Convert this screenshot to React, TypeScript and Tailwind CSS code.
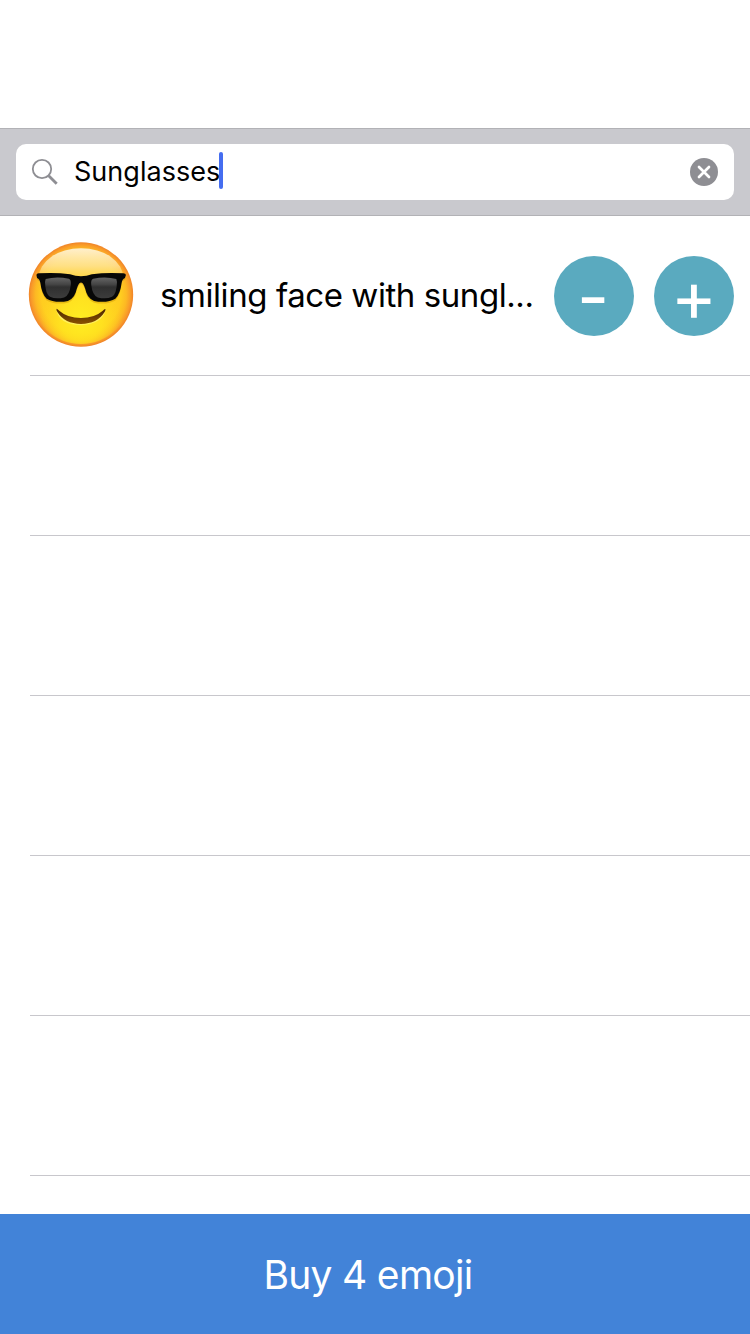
import React from 'react';

function SunglassesFace() {
  return (
    <svg viewBox="24 28 318 318" className="h-[105px] w-[106px] shrink-0" role="img" aria-label="sunglasses emoji">
      <defs>
        <radialGradient id="face" cx="50%" cy="50%" r="50%">
          <stop offset="0" stopColor="#ffd426" />
          <stop offset="0.76" stopColor="#ffcd20" />
          <stop offset="0.87" stopColor="#fdb923" />
          <stop offset="0.95" stopColor="#f99c29" />
          <stop offset="1" stopColor="#f08428" />
        </radialGradient>
        <radialGradient id="glow" cx="50%" cy="76%" r="42%">
          <stop offset="0" stopColor="#ffee22" />
          <stop offset="0.5" stopColor="#ffe81f" stopOpacity="0.75" />
          <stop offset="1" stopColor="#ffdc1f" stopOpacity="0" />
        </radialGradient>
        <linearGradient id="shine" x1="0" y1="0" x2="0" y2="1">
          <stop offset="0" stopColor="#fff3d6" stopOpacity="0.95" />
          <stop offset="0.3" stopColor="#ffe6a6" stopOpacity="0.75" />
          <stop offset="0.65" stopColor="#ffda60" stopOpacity="0.15" />
          <stop offset="0.8" stopColor="#ffd640" stopOpacity="0" />
        </linearGradient>
        <linearGradient id="lens" x1="0" y1="0" x2="0" y2="1">
          <stop offset="0" stopColor="#666666" />
          <stop offset="0.34" stopColor="#444444" />
          <stop offset="0.46" stopColor="#303030" />
          <stop offset="1" stopColor="#3c3c3c" />
        </linearGradient>
        <linearGradient id="smile" x1="0" y1="0" x2="0" y2="1">
          <stop offset="0" stopColor="#4a2600" />
          <stop offset="1" stopColor="#8a5200" />
        </linearGradient>
      </defs>
      <circle cx="183" cy="187" r="158" fill="url(#face)" />
      <circle cx="183" cy="187" r="150" fill="url(#glow)" />
      <ellipse cx="183" cy="136" rx="128" ry="89" fill="url(#shine)" />
      <path
        d="M48 128Q48 123 55 123Q105 119 150 126Q166 132 183 132Q200 132 216 126Q261 119 311 123Q319 123 319 128L316 137Q308 140 306 152Q302 185 287 200Q270 211 235 209Q208 207 199 181Q193 157 187 152Q183 149 179 152Q173 157 167 181Q158 207 131 209Q96 211 79 200Q64 185 60 152Q58 140 50 137Z"
        fill="#c98b00"
        opacity="0.4"
        transform="translate(0 5)"
      />
      <path
        d="M48 128Q48 123 55 123Q105 119 150 126Q166 132 183 132Q200 132 216 126Q261 119 311 123Q319 123 319 128L316 137Q308 140 306 152Q302 185 287 200Q270 211 235 209Q208 207 199 181Q193 157 187 152Q183 149 179 152Q173 157 167 181Q158 207 131 209Q96 211 79 200Q64 185 60 152Q58 140 50 137Z"
        fill="#070707"
      />
      <path d="M76 140Q108 131 146 139Q154 142 152 158Q148 190 132 196Q107 202 89 194Q75 185 74 149Z" fill="url(#lens)" />
      <path d="M290 140Q258 131 220 139Q212 142 214 158Q218 190 234 196Q259 202 277 194Q291 185 292 149Z" fill="url(#lens)" />
      <path d="M108 232Q116 280 183 280Q248 278 258 232Q235 265 183 264Q135 263 108 232Z" fill="#fff36a" opacity="0.8" />
      <path d="M109 230Q113 231 117 236Q142 258 183 258Q224 258 249 236Q254 230 257 231Q258 235 254 241Q232 276 183 276Q134 276 112 241Q107 233 109 230Z" fill="url(#smile)" />
    </svg>
  );
}

function SearchBar() {
  return (
    <div className="h-[88px] border-y border-[#b2b2b6] bg-[#c9c9ce] px-4 py-[15px]">
      <div className="flex h-[56px] items-center rounded-[10px] bg-white pr-4 pl-[15px]">
        <svg viewBox="0 0 28 28" className="h-7 w-7 shrink-0" fill="none" stroke="#8e8e93">
          <circle cx="11" cy="11" r="9.2" strokeWidth="1.8" />
          <path d="M17.7 17.7L25.7 25.7" strokeWidth="2.8" />
        </svg>
        <span className="ml-[15px] text-[27px] leading-[34px] tracking-[0.03px] text-black">Sunglasses</span>
        <span className="mb-[3px] -ml-px h-[37px] w-1 rounded-full bg-[#456df0]" />
        <svg viewBox="0 0 28 28" className="ml-auto h-7 w-7 shrink-0">
          <circle cx="14" cy="14" r="14" fill="#8e8e93" />
          <path d="M9 9L19 19M19 9L9 19" stroke="white" strokeWidth="2.7" strokeLinecap="round" />
        </svg>
      </div>
    </div>
  );
}

function RoundButton({ label, className }: { label: string; className: string }) {
  return (
    <button
      className={`flex h-20 w-20 shrink-0 items-center justify-center rounded-full bg-[#5aaabf] text-[70px] leading-[78px] font-normal text-white ${className}`}
    >
      {label}
    </button>
  );
}

export default function App() {
  return (
    <div className="flex h-[1334px] w-[750px] flex-col overflow-hidden bg-white pt-32 font-['Inter','Liberation_Sans',sans-serif]">
      <SearchBar />
      <main className="min-h-0 flex-1 overflow-hidden">
        <div className="ml-7 flex h-[159px] items-center pr-4">
          <div className="mb-[2px]">
            <SunglassesFace />
          </div>
          <p className="mb-[2px] ml-[26px] flex-1 text-[33px] leading-10 tracking-[-0.43px] whitespace-nowrap text-black">smiling face with sungl...</p>
          <div className="flex gap-5">
            <RoundButton label="-" className="pt-[2px] pr-[2px]" />
            <RoundButton label="+" className="" />
          </div>
        </div>
        <div className="ml-[30px] h-px bg-[#c8c7cc]" />
        {[0, 1, 2, 3, 4].map((row) => (
          <div key={row} className="ml-[30px] h-40 border-b border-[#c8c7cc]" />
        ))}
      </main>
      <button className="h-[120px] shrink-0 bg-[#4283d8] pt-px pr-[14px] text-[39px] leading-[119px] font-normal tracking-[-0.7px] text-white">Buy 4 emoji</button>
    </div>
  );
}
